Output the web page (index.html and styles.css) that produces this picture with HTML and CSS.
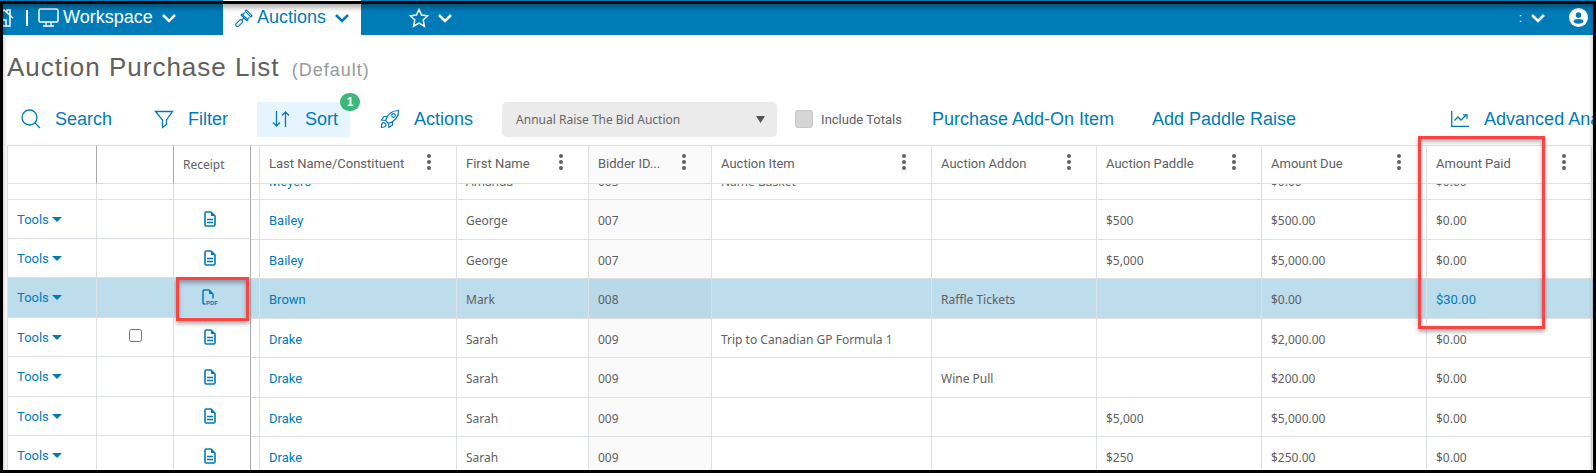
FILE: index.html
```html
<!DOCTYPE html>
<html lang="en">
<head>
    <meta charset="UTF-8">
    <meta name="viewport" content="width=device-width, initial-scale=1.0">
    <title>Auction Purchase List</title>
    <link rel="stylesheet" href="styles.css">
    <script src="script.js" defer></script>
</head>
<body>
    <!-- Shared icons -->
    <svg class="sprite" aria-hidden="true">
        <symbol id="chevron" viewBox="0 0 16 10"><path d="M2 2l6 6 6-6" fill="none" stroke="currentColor" stroke-width="2.500"/></symbol>
        <symbol id="dots" viewBox="0 0 4 16"><circle cx="2" cy="2" r="2"/><circle cx="2" cy="8" r="2"/><circle cx="2" cy="14" r="2"/></symbol>
        <symbol id="file" viewBox="0 0 12 16"><path d="M1 2.2Q1 1 2.2 1H7l4 4v8.800q0 1.200-1.200 1.200H2.200Q1 15 1 13.800z" fill="none" stroke="currentColor" stroke-width="1.600"/><path d="M7 1v4h4z" fill="currentColor"/><path d="M3 8.500h6M3 11.500h6" stroke="currentColor" stroke-width="1.400"/></symbol>
    </svg>

    <header class="topbar">
        <a href="#" class="home" aria-label="Home">
            <svg width="20" height="20" viewBox="0 0 20 20"><path d="M1 10l9-8 9 8M4 8v10h12V8M13 4V2h3v5M8 18v-6h4v6" fill="none" stroke="currentColor" stroke-width="1.500"/></svg>
        </a>
        <span class="divider"></span>
        <button type="button" class="nav-item workspace">
            <svg width="21" height="19" viewBox="0 0 21 19"><rect x="1" y="1" width="19" height="13" rx="1.500" fill="none" stroke="currentColor" stroke-width="1.500"/><path d="M8 14v3.500M13 14v3.500M5 18h11" stroke="currentColor" stroke-width="1.300"/></svg>
            <span>Workspace</span>
            <svg class="chevron" width="16" height="10"><use href="#chevron"/></svg>
        </button>
        <button type="button" class="nav-item active">
            <svg width="18" height="18" viewBox="0 0 18 18"><g fill="none" stroke="currentColor" stroke-width="1.100"><path d="M10.200 2.300l5.500 5.500M11.300 1l5.700 5.700-1.300 1.300M11.300 1l-1.300 1.300M9.800 3.500L7.300 6M14.500 8.200L12 10.700M6 6l6 6 1-1-6-6zM8.800 9.200l-2.300 2.300"/><rect x="-4" y="-1.500" width="8" height="3.400" rx="1.500" transform="translate(4 14) rotate(-45)"/></g></svg>
            <span>Auctions</span>
            <svg class="chevron" width="16" height="10"><use href="#chevron"/></svg>
        </button>
        <button type="button" class="nav-item favorites" aria-label="Favorites">
            <svg width="20" height="20" viewBox="0 0 20 20"><path d="M10 1.500l2.600 5.600 6 .700-4.400 4.200 1.200 6.200L10 15.200l-5.400 3 1.200-6.200L1.400 7.800l6-.7z" fill="none" stroke="currentColor" stroke-width="1.500"/></svg>
            <svg class="chevron" width="16" height="10"><use href="#chevron"/></svg>
        </button>
        <div class="account">
            <span class="initial">:</span>
            <svg class="chevron" width="16" height="10"><use href="#chevron"/></svg>
            <button type="button" class="avatar" aria-label="My account">
                <svg width="19" height="19" viewBox="0 0 20 20"><circle cx="10" cy="10" r="10" fill="#fff"/><circle cx="10" cy="7.500" r="2.900" fill="#007bb8"/><path d="M5 14q0-2.500 5-2.500t5 2.500-5 2.600-5-2.600z" fill="#007bb8"/></svg>
            </button>
        </div>
    </header>

    <main>
        <h1>Auction Purchase List <small>(Default)</small></h1>

        <div class="toolbar">
            <button type="button" class="tool search">
                <svg width="20" height="20" viewBox="0 0 20 20"><path d="M14 14l5 5" stroke="currentColor" stroke-width="1.300"/><circle cx="8.500" cy="8.500" r="7.500" fill="none" stroke="currentColor" stroke-width="1.300"/></svg>
                Search
            </button>
            <button type="button" class="tool">
                <svg width="20" height="20" viewBox="0 0 20 20"><path d="M1.500 2.500h17L12.500 11v4.500l-4 3V11z" fill="none" stroke="currentColor" stroke-width="1.300"/></svg>
                Filter
            </button>
            <button type="button" class="tool sort">
                <svg width="20" height="20" viewBox="0 0 20 20"><path d="M5.500 2v15M2 13.500l3.500 3.500L9 13.500M14.500 18V3M11 6.500L14.500 3 18 6.500" fill="none" stroke="currentColor" stroke-width="1.300"/></svg>
                Sort
                <span class="badge">1</span>
            </button>
            <button type="button" class="tool">
                <svg width="20" height="20" viewBox="0 0 20 20"><g fill="none" stroke="currentColor" stroke-width="1.200"><path d="M5.500 11.500Q9 1.500 18.500 1.500q.5 9-10 13zM7.500 7.500H4L1.500 11l4 .5M12.500 12v4L9 18.500l-.5-4"/><circle cx="13.500" cy="6.500" r="1.800"/><path d="M1.500 18.500v-3q1-2.500 3-1.500t1 3q-1 1.500-4 1.500z"/></g></svg>
                Actions
            </button>

            <select class="auction-select" aria-label="Auction">
                <option>Annual Raise The Bid Auction</option>
            </select>
            <label class="totals"><input type="checkbox"> Include Totals</label>
            <a href="#" class="link">Purchase Add-On Item</a>
            <a href="#" class="link paddle">Add Paddle Raise</a>
            <a href="#" class="link analytics">
                <svg width="18" height="18" viewBox="0 0 18 18"><path d="M.7 1v15.300H18M3.500 10.500l3.500-3.500 3 3 5.500-5.200M12 4.800h4v4" fill="none" stroke="currentColor" stroke-width="1.300"/></svg>
                Advanced Analytics
            </a>
        </div>

        <div class="grid">
            <div class="grid-scroll" id="grid-scroll">
                <table class="pinned">
                    <colgroup><col class="w-tools"><col class="w-check"><col class="w-receipt"></colgroup>
                    <thead><tr><th></th><th></th><th>Receipt</th></tr></thead>
                    <tbody>
                        <tr><td></td><td></td><td></td></tr>
                        <tr><td><button type="button" class="tools">Tools</button></td><td></td><td class="receipt"><a href="#" aria-label="Receipt"><svg width="12" height="16"><use href="#file"/></svg></a></td></tr>
                        <tr><td><button type="button" class="tools">Tools</button></td><td></td><td class="receipt"><a href="#" aria-label="Receipt"><svg width="12" height="16"><use href="#file"/></svg></a></td></tr>
                        <tr class="selected"><td><button type="button" class="tools">Tools</button></td><td></td><td class="receipt"><a href="#" aria-label="PDF receipt"><svg width="16" height="17" viewBox="0 0 16 17"><path d="M3.500 15H2.200Q1 15 1 13.800V2.200Q1 1 2.200 1H7l4 4v4.500" fill="none" stroke="currentColor" stroke-width="1.500"/><path d="M7 1v4h4z" fill="currentColor"/><text x="4" y="16" class="pdf">PDF</text></svg></a></td></tr>
                        <tr><td><button type="button" class="tools">Tools</button></td><td class="check"><input type="checkbox" aria-label="Select row"></td><td class="receipt"><a href="#" aria-label="Receipt"><svg width="12" height="16"><use href="#file"/></svg></a></td></tr>
                        <tr><td><button type="button" class="tools">Tools</button></td><td></td><td class="receipt"><a href="#" aria-label="Receipt"><svg width="12" height="16"><use href="#file"/></svg></a></td></tr>
                        <tr><td><button type="button" class="tools">Tools</button></td><td></td><td class="receipt"><a href="#" aria-label="Receipt"><svg width="12" height="16"><use href="#file"/></svg></a></td></tr>
                        <tr><td><button type="button" class="tools">Tools</button></td><td></td><td class="receipt"><a href="#" aria-label="Receipt"><svg width="12" height="16"><use href="#file"/></svg></a></td></tr>
                    </tbody>
                </table>
                <table class="data">
                    <colgroup><col class="w-gap"><col class="w-last"><col class="w-first"><col class="w-bidder"><col class="w-item"><col class="w-std"><col class="w-std"><col class="w-std"><col class="w-std"><col></colgroup>
                    <thead>
                        <tr>
                            <th></th>
                            <th><div class="head">Last Name/Constituent<svg class="dots"><use href="#dots"/></svg></div></th>
                            <th><div class="head">First Name<svg class="dots"><use href="#dots"/></svg></div></th>
                            <th class="tint"><div class="head">Bidder ID...<svg class="dots"><use href="#dots"/></svg></div></th>
                            <th><div class="head">Auction Item<svg class="dots"><use href="#dots"/></svg></div></th>
                            <th><div class="head">Auction Addon<svg class="dots"><use href="#dots"/></svg></div></th>
                            <th><div class="head">Auction Paddle<svg class="dots"><use href="#dots"/></svg></div></th>
                            <th><div class="head">Amount Due<svg class="dots"><use href="#dots"/></svg></div></th>
                            <th><div class="head">Amount Paid<svg class="dots"><use href="#dots"/></svg></div></th>
                            <th></th>
                        </tr>
                    </thead>
                    <tbody>
                        <tr><td></td><td><a href="#">Meyers</a></td><td>Amanda</td><td class="tint">003</td><td>Name Basket</td><td></td><td></td><td>$0.00</td><td>$0.00</td><td></td></tr>
                        <tr><td></td><td><a href="#">Bailey</a></td><td>George</td><td class="tint">007</td><td></td><td></td><td>$500</td><td>$500.00</td><td>$0.00</td><td></td></tr>
                        <tr><td></td><td><a href="#">Bailey</a></td><td>George</td><td class="tint">007</td><td></td><td></td><td>$5,000</td><td>$5,000.00</td><td>$0.00</td><td></td></tr>
                        <tr class="selected"><td></td><td><a href="#">Brown</a></td><td>Mark</td><td class="tint">008</td><td></td><td>Raffle Tickets</td><td></td><td>$0.00</td><td><a href="#">$30.00</a></td><td></td></tr>
                        <tr><td></td><td><a href="#">Drake</a></td><td>Sarah</td><td class="tint">009</td><td>Trip to Canadian GP Formula 1</td><td></td><td></td><td>$2,000.00</td><td>$0.00</td><td></td></tr>
                        <tr><td></td><td><a href="#">Drake</a></td><td>Sarah</td><td class="tint">009</td><td></td><td>Wine Pull</td><td></td><td>$200.00</td><td>$0.00</td><td></td></tr>
                        <tr><td></td><td><a href="#">Drake</a></td><td>Sarah</td><td class="tint">009</td><td></td><td></td><td>$5,000</td><td>$5,000.00</td><td>$0.00</td><td></td></tr>
                        <tr><td></td><td><a href="#">Drake</a></td><td>Sarah</td><td class="tint">009</td><td></td><td></td><td>$250</td><td>$250.00</td><td>$0.00</td><td></td></tr>
                    </tbody>
                </table>
            </div>
            <div class="highlight highlight-receipt"></div>
            <div class="highlight highlight-paid"></div>
        </div>
    </main>

    <div class="frame"></div>
</body>
</html>
```
FILE: styles.css
```css
/* General */
* {
    box-sizing: border-box;
}

body {
    margin: 0;
    height: 100vh;
    overflow: hidden;
    display: flex;
    flex-direction: column;
    font-family: "Liberation Sans", Arial, sans-serif;
    color: #606060;
    background: #fff;
}

button {
    border: 0;
    padding: 0;
    background: none;
    font: inherit;
    color: inherit;
    cursor: pointer;
}

a {
    color: #007bb8;
    text-decoration: none;
}

svg {
    flex: none;
}

.sprite {
    position: absolute;
    width: 0;
    height: 0;
}

/* Top bar */
.topbar {
    flex: none;
    display: flex;
    align-items: stretch;
    height: 35px;
    background: #007bb8;
    color: #fff;
    font-size: 18px;
}

.home {
    display: flex;
    align-items: center;
    margin-left: -6px;
    color: #fff;
}

.divider {
    align-self: center;
    width: 2px;
    height: 16px;
    margin: 0 10px 0 12px;
    background: #fff;
}

.nav-item {
    display: flex;
    align-items: center;
    gap: 4px;
}

.chevron {
    margin-left: 4px;
}

.workspace {
    width: 185px;
}

.active {
    width: 138px;
    padding-left: 12px;
    background: #fff;
    color: #007bb8;
}

.favorites {
    margin-left: 48px;
}

.account {
    display: flex;
    align-items: center;
    margin-left: auto;
    padding-right: 8px;
}

.initial {
    margin-right: 4px;
    font-size: 12px;
}

.avatar {
    display: flex;
    margin-left: 23px;
}

/* Page */
main {
    flex: 1;
    min-height: 0;
    display: flex;
    flex-direction: column;
    padding-left: 7px;
}

h1 {
    margin: 0;
    padding: 16px 0 15px;
    font-size: 26px;
    font-weight: normal;
    line-height: 32px;
    letter-spacing: 1px;
}

h1 small {
    margin-left: 4px;
    font-size: 18px;
    color: #999;
}

/* Toolbar */
.toolbar {
    flex: none;
    display: flex;
    align-items: center;
    height: 36px;
    margin-bottom: 8px;
    color: #007bb8;
    font-size: 18px;
    white-space: nowrap;
}

.toolbar > * {
    flex: none;
}

.tool {
    position: relative;
    display: flex;
    align-items: center;
    gap: 14px;
    height: 35px;
    padding: 0 15px 0 14px;
    margin-right: 14px;
}

.search {
    margin-right: 13px;
}

.sort {
    padding-right: 12px;
    margin-right: 16px;
    background: #e6f5fd;
}

.badge {
    position: absolute;
    top: -9px;
    right: -10px;
    width: 20px;
    height: 18px;
    border-radius: 9px;
    background: #3cb878;
    color: #fff;
    font: bold 12px/18px "Liberation Sans", Arial, sans-serif;
}

.auction-select {
    appearance: none;
    width: 275px;
    height: 35px;
    padding: 0 14px;
    border: 0;
    border-radius: 5px;
    background: #ebebeb url("data:image/svg+xml,%3Csvg xmlns='http://www.w3.org/2000/svg' width='9' height='7'%3E%3Cpath d='M0 0h9L4.500 7z' fill='%23555'/%3E%3C/svg%3E") no-repeat right 12px center;
    color: #666;
    font: 12px "Noto Sans", sans-serif;
}

.totals {
    display: flex;
    align-items: center;
    gap: 8px;
    margin: 0 30px 0 18px;
    color: #606060;
    font: 13px Roboto, sans-serif;
}

.totals input {
    appearance: none;
    width: 18px;
    height: 18px;
    margin: 0;
    border: 1px solid #c8c8c8;
    border-radius: 3px;
    background: #d5d5d5;
}

.paddle {
    margin-left: 38px;
}

.analytics {
    display: flex;
    align-items: center;
    gap: 15px;
    margin-left: 155px;
}

/* Grid */
.grid {
    position: relative;
    flex: 1;
    min-height: 0;
}

.grid-scroll {
    display: flex;
    align-items: flex-start;
    height: 100%;
    overflow: hidden;
}

table {
    border-collapse: separate;
    border-spacing: 0;
    table-layout: fixed;
    font: 12px "Noto Sans", sans-serif;
}

.pinned {
    flex: none;
    width: 244px;
    border-left: 1px solid #dde2eb;
}

.data {
    flex: 1;
    width: 100%;
}

.w-tools { width: 89px; }
.w-check { width: 77px; }
.w-receipt { width: 77px; }
.w-gap { width: 9px; }
.w-last { width: 197px; }
.w-first { width: 132px; }
.w-bidder { width: 123px; }
.w-item { width: 220px; }
.w-std { width: 165px; }

th {
    position: sticky;
    top: 0;
    z-index: 1;
    height: 39px;
    padding: 0 9px 2px;
    border-top: 1px solid #dcdfe4;
    border-bottom: 1px solid #dcdfe4;
    border-right: 1px solid #dcdfe4;
    background: #fff;
    font: 13px Roboto, sans-serif;
    text-align: left;
    white-space: nowrap;
}

.pinned th {
    padding-bottom: 0;
    border-right-color: #aaa;
    font: 12px "Noto Sans", sans-serif;
}

.pinned th:last-child,
.pinned td:last-child {
    border-right-color: #aaa;
}

td {
    height: 39px;
    padding: 2px 9px 0;
    border-right: 1px solid #dcdfe4;
    border-bottom: 1px solid #dcdfe4;
    white-space: nowrap;
}

tr:nth-child(even) td {
    height: 40px;
}

.pinned tr:nth-child(2) td {
    height: 39px;
}

.pinned td {
    padding-top: 0;
}

td a,
.tools {
    color: #007bb8;
    font: 13px Roboto, sans-serif;
}

.head {
    display: flex;
    align-items: center;
    justify-content: space-between;
    padding-right: 16px;
}

.dots {
    width: 4px;
    height: 16px;
    margin-bottom: 4px;
    fill: #606060;
}

.tint {
    background: #fafafa;
}

.selected td {
    background: #bddcec;
}

.selected .tint {
    background: #b9d8e8;
}

.tools::after {
    content: "";
    display: inline-block;
    margin: 0 0 2px 3px;
    border: 5px solid transparent;
    border-top-color: #007bb8;
    border-bottom: 0;
}

.receipt a {
    display: flex;
    justify-content: center;
    padding-right: 5px;
}

.pdf {
    font: bold 6px "Liberation Sans", Arial, sans-serif;
    fill: #007bb8;
}

.check {
    text-align: center;
}

.check input {
    margin: 0;
}

/* Callout boxes over the grid */
.highlight {
    position: absolute;
    z-index: 2;
    border: 3px solid #ff4343;
    box-shadow: 0 3px 4px rgba(0, 0, 0, 0.3), inset 0 3px 4px rgba(0, 0, 0, 0.3);
    pointer-events: none;
}

.highlight-receipt {
    top: 132px;
    left: 169px;
    width: 73px;
    height: 44px;
}

.highlight-paid {
    top: -9px;
    left: 1411px;
    width: 127px;
    height: 193px;
}

/* Window frame */
.frame {
    position: fixed;
    inset: 1px 0 0;
    z-index: 3;
    border: 3px solid #000;
    box-shadow: inset 0 4px 5px rgba(0, 0, 0, 0.3);
    pointer-events: none;
}
```
FILE: script.js
```js
// the grid opens scrolled part way into its first row
document.getElementById('grid-scroll').scrollTop = 23;
```
